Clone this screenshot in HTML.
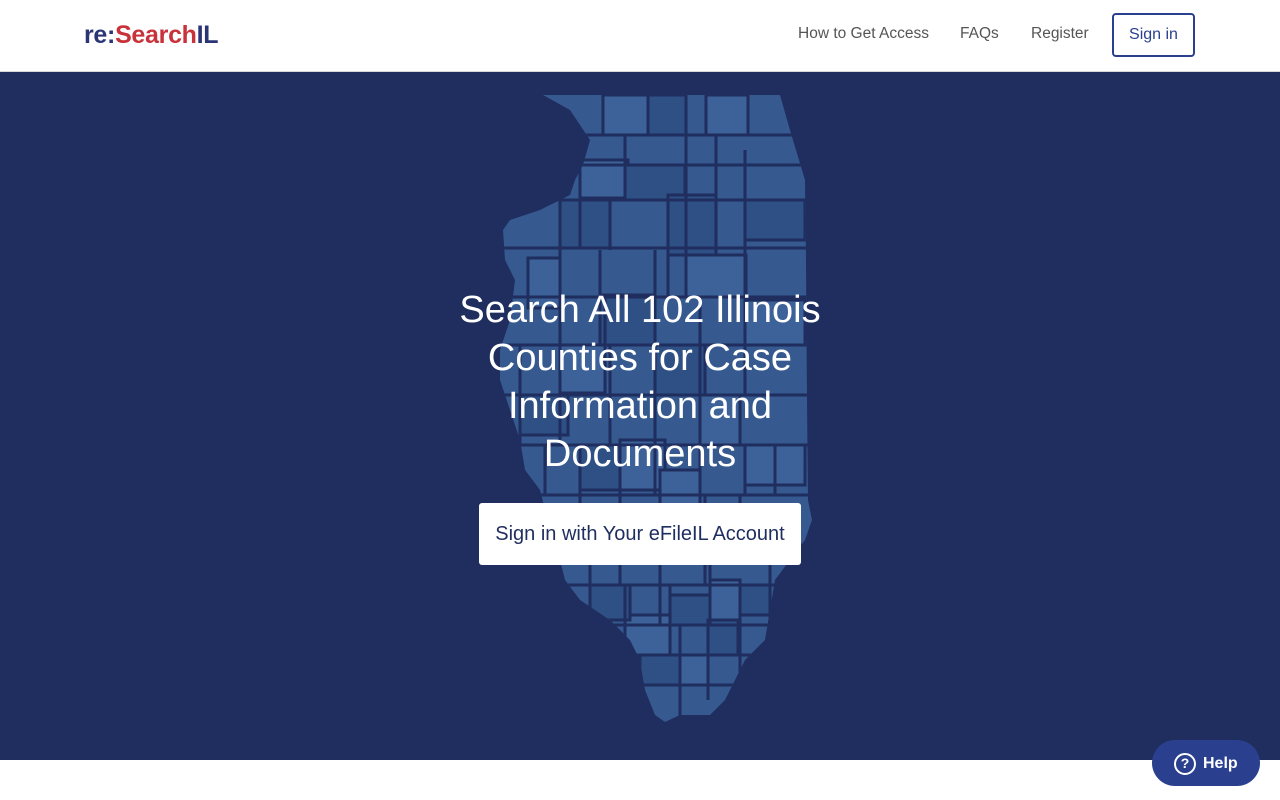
<!DOCTYPE html>
<html><head><meta charset="utf-8"><style>
*{margin:0;padding:0;box-sizing:border-box}
body{width:1280px;height:800px;overflow:hidden;background:#fff;font-family:"Liberation Sans",Arial,sans-serif}
.hdr{position:absolute;top:0;left:0;width:1280px;height:72px;background:#fff;border-bottom:1px solid #d8d8d8}
.logo{position:absolute;left:84px;top:21px;font-size:25px;font-weight:bold;letter-spacing:-0.3px}
.nav a{position:absolute;top:25px;font-size:15.5px;color:#555;text-decoration:none}
.sign{position:absolute;left:1112px;top:13px;width:83px;height:44px;border:2px solid #2b3f8f;border-radius:4px;color:#2b3f8f;font-size:16px;text-align:center;line-height:40px}
.hero{position:absolute;top:72px;left:0;width:1280px;height:688px;background:#1f2d5f}
h1{position:absolute;left:440px;top:286px;width:400px;text-align:center;color:#fff;font-size:38px;font-weight:normal;line-height:48px}
.btn{position:absolute;left:479px;top:503px;width:322px;height:62px;background:#fff;border-radius:3px;color:#1f2d5f;font-size:20px;text-align:center;line-height:62px}
.help{position:absolute;left:1152px;top:740px;width:108px;height:46px;border-radius:23px;background:#2b3f8f;color:#fff;font-weight:bold;font-size:16px;line-height:48px;padding-left:51px}
.help span{position:absolute;left:22px;top:13px;width:22px;height:22px;border:2.5px solid #fff;border-radius:50%;font-size:14px;line-height:17px;text-align:center;padding:0}
</style></head><body>
<div class="hdr">
<div class="logo"><span style="color:#2b3575">re:</span><span style="color:#c8323a">Search</span><span style="color:#2b3575">IL</span></div>
<div class="nav"><a style="left:798px">How to Get Access</a><a style="left:960px">FAQs</a><a style="left:1031px">Register</a></div>
<div class="sign">Sign in</div>
</div>
<div class="hero"></div>
<svg style="position:absolute;left:0;top:0" width="1280" height="800">
<defs><clipPath id="il"><polygon points="543,95 780,95 790,130 805,180 806,260 807,400 808,500 812,520 805,540 790,560 775,580 770,610 765,640 745,660 735,680 725,700 710,715 680,715 665,722 655,715 645,690 640,660 630,640 610,620 580,600 565,580 560,560 555,530 545,510 540,490 525,470 520,440 510,410 500,380 500,350 510,320 515,280 505,260 503,230 510,220 540,210 570,195 575,180 583,165 590,140 570,110"/></clipPath></defs>
<g clip-path="url(#il)" stroke="#1f2d5f" stroke-width="3">
<rect x="490" y="90" width="330" height="640" fill="#36598f"/>
<g fill="#3d629a">
<rect x="603" y="95" width="45" height="40"/><rect x="706" y="95" width="42" height="40"/><rect x="580" y="160" width="48" height="38"/><rect x="686" y="195" width="30" height="55"/><rect x="528" y="258" width="32" height="50"/><rect x="686" y="255" width="60" height="42"/><rect x="745" y="300" width="60" height="45"/><rect x="560" y="345" width="45" height="48"/><rect x="700" y="395" width="40" height="50"/><rect x="620" y="440" width="45" height="50"/><rect x="745" y="445" width="60" height="40"/><rect x="660" y="470" width="40" height="35"/><rect x="710" y="580" width="30" height="40"/><rect x="625" y="615" width="45" height="40"/><rect x="680" y="655" width="28" height="30"/>
</g>
<g fill="#2f5085">
<rect x="648" y="95" width="38" height="40"/><rect x="625" y="165" width="60" height="35"/><rect x="560" y="200" width="50" height="48"/><rect x="668" y="195" width="48" height="60"/><rect x="745" y="200" width="60" height="40"/><rect x="600" y="295" width="55" height="50"/><rect x="655" y="345" width="50" height="50"/><rect x="520" y="395" width="48" height="40"/><rect x="580" y="445" width="40" height="45"/><rect x="705" y="505" width="40" height="45"/><rect x="590" y="585" width="40" height="35"/><rect x="740" y="585" width="30" height="30"/><rect x="670" y="595" width="40" height="30"/><rect x="640" y="655" width="40" height="30"/><rect x="708" y="620" width="30" height="35"/>
</g>
<g fill="none">
<path d="M490,135H820M490,165H820M490,200H820M490,248H820M490,297H820M490,345H820M490,395H820M490,445H820M490,495H820M490,545H820M490,585H820M490,625H820M490,655H820M490,685H820"/>
<path d="M603,95V135M648,95V135M686,95V165M706,95V135M748,95V135M625,135V200M686,165V250M716,135V250M745,150V300M580,165V248M610,200V250M668,200V297M560,248V300M600,250V345M655,250V297M686,250V297M745,250V297M560,297V395M605,297V345M655,297V395M700,297V345M745,297V395M520,345V445M560,395V445M610,345V445M655,395V495M700,345V445M740,395V445M545,445V495M580,445V545M620,445V495M660,470V545M700,445V545M745,445V495M775,445V495M620,495V585M660,545V625M705,495V585M740,495V545M590,545V625M625,585V655M670,585V655M710,545V625M740,585V685M680,625V720M708,655V700M770,545V625"/>
</g>
</g>
</svg>
<h1>Search All 102 Illinois Counties for Case Information and Documents</h1>
<div class="btn">Sign in with Your eFileIL Account</div>
<div class="help"><span>?</span>Help</div>
</body></html>
